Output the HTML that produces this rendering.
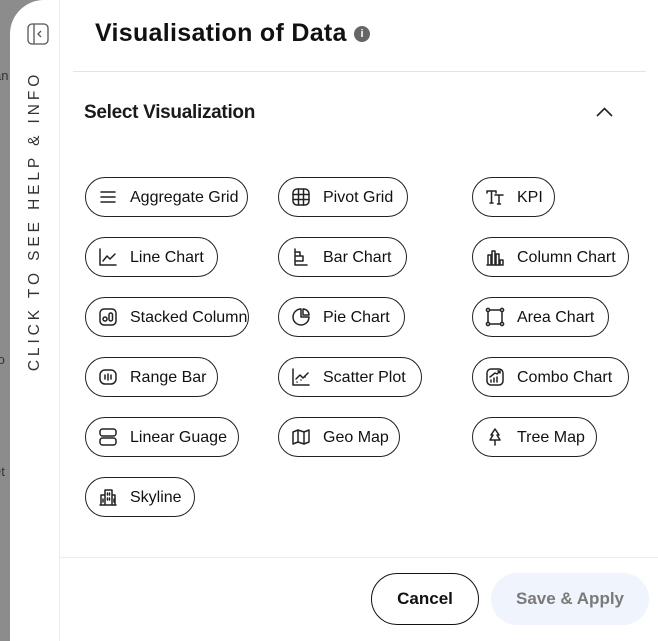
<!DOCTYPE html>
<html style="width:658px;height:641px;overflow:hidden"><head><meta charset="utf-8"><style>
*{box-sizing:border-box;margin:0;padding:0}
body{width:658px;height:641px;overflow:hidden;background:#8c8c8c;font-family:"Liberation Sans",sans-serif;position:relative}
.panel{position:absolute;left:10px;top:0;width:648px;height:641px;background:#fff;border-top-left-radius:34px}
.side{position:absolute;left:59px;top:0;width:1px;height:641px;background:#ececec}
.vt{position:absolute;left:35px;top:221px;transform:translate(-50%,-50%) rotate(-90deg);white-space:nowrap;font-size:15.5px;letter-spacing:3.9px;color:#333}
.pill{position:absolute;height:40px;border:1.3px solid #222;border-radius:20px;font-size:16px;color:#111;line-height:40px;padding-left:44px}
.pill svg{position:absolute;left:12px;top:9px;width:20px;height:20px;fill:none;stroke:#222;stroke-width:1.5;stroke-linecap:round;stroke-linejoin:round}
.gl{position:absolute;left:5px;font-size:13px;color:#333}
</style></head><body>
<div class="gl" style="top:68px;left:-6px">an</div>
<div class="gl" style="top:352px;left:-6px">to</div>
<div class="gl" style="top:464px;left:-6px">et</div>
<div class="panel"></div>
<div class="side"></div>
<svg style="position:absolute;left:27px;top:23px" width="22" height="22" viewBox="0 0 22 22" fill="none" stroke="#555" stroke-width="1.3"><rect x="1" y="1" width="20" height="20" rx="4"/><line x1="7" y1="1" x2="7" y2="21"/><path d="M14 8l-3 3 3 3"/></svg>
<div class="vt">CLICK TO SEE HELP &amp; INFO</div>
<div style="position:absolute;left:95px;top:19px;font-size:25px;font-weight:bold;color:#111;letter-spacing:0.3px">Visualisation of Data</div>
<div style="position:absolute;left:354px;top:26px;width:16px;height:16px;border-radius:50%;background:#666;color:#fff;font-size:11px;font-weight:bold;text-align:center;line-height:16px">i</div>
<div style="position:absolute;left:73px;top:71px;width:573px;height:1px;background:#e4e4e4"></div>
<div style="position:absolute;left:84px;top:102px;font-size:19px;font-weight:bold;color:#1a1a1a;letter-spacing:-0.3px">Select Visualization</div>
<svg style="position:absolute;left:595px;top:106px" width="19" height="12" viewBox="0 0 19 12" fill="none" stroke="#222" stroke-width="1.6"><path d="M2 10l7.5-7.5L17 10"/></svg>

<div class="pill" style="left:85px;top:177px;width:163px"><svg viewBox="0 0 20 20"><path d="M3 5h14M3 10h14M3 15h14"/></svg>Aggregate Grid</div>
<div class="pill" style="left:278px;top:177px;width:130px"><svg viewBox="0 0 20 20"><rect x="2" y="2" width="16" height="16" rx="4"/><path d="M7.5 2v16M12.5 2v16M2 7.5h16M2 12.5h16"/></svg>Pivot Grid</div>
<div class="pill" style="left:472px;top:177px;width:83px"><svg viewBox="0 0 20 20"><path d="M2 6V4h9v2M6.5 4v12M5 16h3M10 8h8M14 8v9M12.5 17h3"/></svg>KPI</div>

<div class="pill" style="left:85px;top:237px;width:133px"><svg viewBox="0 0 20 20"><path d="M2 2v16h16M5 14l4-5 3 3 5-5"/></svg>Line Chart</div>
<div class="pill" style="left:278px;top:237px;width:129px"><svg viewBox="0 0 20 20"><path d="M4 2v16M4 18h12M4 5h5v4M4 9h8v5H4"/></svg>Bar Chart</div>
<div class="pill" style="left:472px;top:237px;width:157px"><svg viewBox="0 0 20 20"><path d="M2 18h16M3 18V8h3v10M7 18V4h3v14M11 18V7h3v11M15 18v-5h3v5"/></svg>Column Chart</div>

<div class="pill" style="left:85px;top:297px;width:164px;overflow:hidden;white-space:nowrap"><svg viewBox="0 0 20 20"><rect x="2" y="2" width="16" height="16" rx="4"/><circle cx="7" cy="12" r="2"/><rect x="11" y="6" width="3.5" height="8" rx="1.7"/></svg>Stacked Column</div>
<div class="pill" style="left:278px;top:297px;width:127px"><svg viewBox="0 0 20 20"><path d="M10 2a8 8 0 1 0 8 8h-8z"/><path d="M12 2v6h6a6 6 0 0 0-6-6z"/></svg>Pie Chart</div>
<div class="pill" style="left:472px;top:297px;width:137px"><svg viewBox="0 0 20 20"><rect x="3" y="3" width="14" height="14"/><circle cx="3" cy="3" r="1.6" fill="#fff"/><circle cx="17" cy="3" r="1.6" fill="#fff"/><circle cx="3" cy="17" r="1.6" fill="#fff"/><circle cx="17" cy="17" r="1.6" fill="#fff"/></svg>Area Chart</div>

<div class="pill" style="left:85px;top:357px;width:133px"><svg viewBox="0 0 20 20"><rect x="2" y="3" width="16" height="14" rx="5"/><path d="M7 8v4M10 7v6M13 8v4"/></svg>Range Bar</div>
<div class="pill" style="left:278px;top:357px;width:144px"><svg viewBox="0 0 20 20"><path d="M2 2v16h16M5 12l4-4 3 3 5-5M6 15h.1M10 13h.1M14 10h.1"/></svg>Scatter Plot</div>
<div class="pill" style="left:472px;top:357px;width:157px"><svg viewBox="0 0 20 20"><rect x="2" y="2" width="16" height="16" rx="4"/><path d="M6 15v-2M9 15v-4M12 15v-5M5 10l5-4 2 1 3-3M13 4h2v2"/></svg>Combo Chart</div>

<div class="pill" style="left:85px;top:417px;width:154px"><svg viewBox="0 0 20 20"><rect x="2" y="2" width="16" height="7" rx="2.5"/><rect x="2" y="11" width="16" height="7" rx="2.5"/></svg>Linear Guage</div>
<div class="pill" style="left:278px;top:417px;width:122px"><svg viewBox="0 0 20 20"><path d="M2 5l5-2 6 2 5-2v12l-5 2-6-2-5 2zM7 3v12M13 5v12"/></svg>Geo Map</div>
<div class="pill" style="left:472px;top:417px;width:125px"><svg viewBox="0 0 20 20"><path d="M10 2l-4 6h2l-3 5h10l-3-5h2zM10 13v5"/></svg>Tree Map</div>

<div class="pill" style="left:85px;top:477px;width:110px"><svg viewBox="0 0 20 20"><path d="M2 18h16M3 18V8h4M7 18V3h7v15M14 8h3v10M9.5 6v2M11.5 6v2M9.5 11v2M11.5 11v2M5 12v3M16 12v3"/></svg>Skyline</div>

<div style="position:absolute;left:60px;top:557px;width:598px;height:1px;background:#ececec"></div>
<div style="position:absolute;left:371px;top:573px;width:108px;height:52px;border:1.3px solid #111;border-radius:26px;text-align:center;line-height:50px;font-size:17px;font-weight:bold;color:#111">Cancel</div>
<div style="position:absolute;left:491px;top:573px;width:158px;height:52px;background:#f0f4fd;border-radius:26px;text-align:center;line-height:52px;font-size:17px;font-weight:bold;color:#7a7a7a">Save &amp; Apply</div>
</body></html>
